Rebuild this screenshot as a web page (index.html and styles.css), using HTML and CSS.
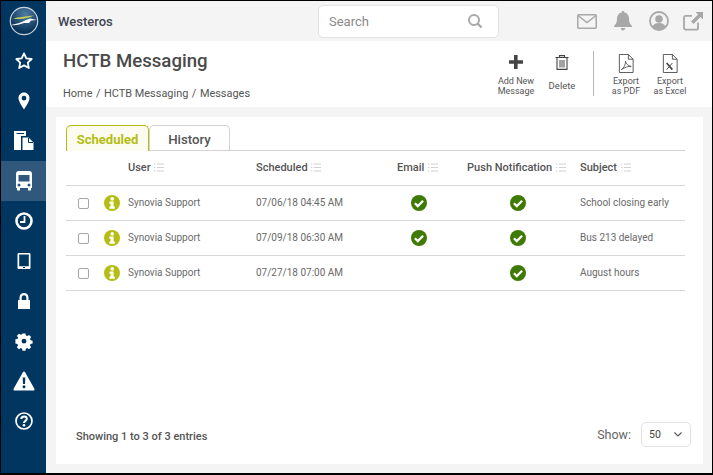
FILE: index.html
```html
<!DOCTYPE html>
<html lang="en">
<head>
<meta charset="utf-8">
<title>HCTB Messaging</title>
<link rel="stylesheet" href="styles.css">
</head>
<body>
<svg class="defs" width="0" height="0" aria-hidden="true">
  <symbol id="sort" viewBox="0 0 10 9"><path d="M0 1h1.500M3 1h7M0 4.500h1.500M3 4.500h7M0 8h1.500M3 8h7" fill="none" stroke="currentColor" stroke-width="1"/></symbol>
  <symbol id="info" viewBox="0 0 16 16"><circle cx="8" cy="8" r="8" fill="#b5bd13"/><circle cx="8.200" cy="3.900" r="1.800" fill="#fff"/><path d="M5.400 6.600h4.200v5h1.200v2.200H5.400v-2.200h1.200V8.800H5.400z" fill="#fff"/></symbol>
  <symbol id="check" viewBox="0 0 16 16"><circle cx="8" cy="8" r="8" fill="#3f7a05"/><path d="M3.900 8.200l2.900 2.900 5.300-5.300" fill="none" stroke="#fff" stroke-width="2.200"/></symbol>
</svg>
<div class="app">
  <nav class="side">
    <div class="logo">
      <svg width="30" height="30" viewBox="0 0 30 30">
        <defs><radialGradient id="lg" cx="55%" cy="25%" r="65%"><stop offset="0" stop-color="#4f7da3"/><stop offset="1" stop-color="#0a3359"/></radialGradient></defs>
        <circle cx="15" cy="15" r="13.700" fill="url(#lg)" stroke="#c9d3dc" stroke-width="1.200"/>
        <path d="M4 12.500C10 11 18 10 25 9.500 18 12.500 12 14 4 12.500z" fill="#c6cf55"/>
        <path d="M2 19c6-1 11-3 15-5l4-1.500 7 1.500-6 .5-2 2.500-5 0C11 18.500 6 20 2 19z" fill="#fff"/>
      </svg>
    </div>
    <a class="nav-item"><svg width="20" height="20" viewBox="0 0 20 20"><path d="M10 2.400l2.300 4.900 5.400.7-3.900 3.700 1 5.300L10 14.400l-4.800 2.600 1-5.300L2.300 8l5.400-.7z" fill="none" stroke="#fff" stroke-width="1.800" stroke-linejoin="round"/></svg></a>
    <a class="nav-item"><svg width="20" height="20" viewBox="0 0 20 20"><path fill-rule="evenodd" d="M10 1.500c3.300 0 5.500 2.500 5.500 5.500 0 3.500-3.700 8.500-5.500 11.500C8.200 15.500 4.500 10.500 4.500 7c0-3 2.200-5.500 5.500-5.500zM10 4.800a2.400 2.400 0 1 0 0 4.800 2.400 2.400 0 0 0 0-4.800z" fill="#fff"/></svg></a>
    <a class="nav-item"><svg width="22" height="22" viewBox="0 0 22 22"><path d="M1 1h12v5H8v14H1z" fill="#fff"/><path d="M3.500 3h7.500v1H3.500z" fill="#003660"/><path d="M9.500 7.500h6l5 5V20h-11z" fill="#fff"/><path d="M15.500 8v4.500H20" fill="none" stroke="#003660"/></svg></a>
    <a class="nav-item active"><svg width="20" height="22" viewBox="0 0 20 22"><path fill-rule="evenodd" d="M5 1h10c2 0 3 1 3 3v14h-1v2.500h-3V18H6v2.500H3V18H2V4c0-2 1-3 3-3zM4.500 5v6.500h11V5zM5 13.500a1.500 1.500 0 1 0 0 3 1.500 1.500 0 0 0 0-3zm10 0a1.500 1.500 0 1 0 0 3 1.500 1.500 0 0 0 0-3z" fill="#fff"/></svg></a>
    <a class="nav-item"><svg width="20" height="20" viewBox="0 0 20 20"><circle cx="10" cy="10" r="7.500" fill="none" stroke="#fff" stroke-width="2.600"/><path d="M10.500 5v6H6" fill="none" stroke="#fff" stroke-width="1.800"/></svg></a>
    <a class="nav-item"><svg width="16" height="20" viewBox="0 0 16 20"><path fill-rule="evenodd" d="M3 2h10c1 0 1.500.5 1.500 1.500v13c0 1-.5 1.500-1.500 1.500H3c-1 0-1.500-.5-1.500-1.500v-13C1.500 2.500 2 2 3 2zm.200 1.600v11.600h9.600V3.600zM7 16v.900h2V16z" fill="#fff"/></svg></a>
    <a class="nav-item"><svg width="16" height="20" viewBox="0 0 16 20"><path fill-rule="evenodd" d="M8 2c2.800 0 4.500 2 4.500 4.500V9h1.500v9H2V9h1.500V6.500C3.500 4 5.200 2 8 2zm0 2.200C6.500 4.200 5.700 5.200 5.700 6.700V9h4.600V6.700C10.300 5.200 9.500 4.200 8 4.200z" fill="#fff"/></svg></a>
    <a class="nav-item"><svg width="20" height="20" viewBox="0 0 20 20"><path fill-rule="evenodd" d="M8.300 1.500h3.400l.5 2.400 1.500.6 2.100-1.300 2.400 2.400-1.300 2.100.6 1.500 2.400.5v3.400l-2.400.5-.6 1.500 1.300 2.100-2.400 2.400-2.100-1.300-1.500.6-.5 2.400H8.300l-.5-2.400-1.500-.6-2.100 1.300-2.400-2.400 1.300-2.100-.6-1.500-2.400-.5V8.200l2.400-.5.6-1.500-1.300-2.100 2.400-2.400 2.100 1.300 1.500-.6zM10 7.500a2.800 2.800 0 1 0 0 5.600 2.800 2.800 0 0 0 0-5.600z" transform="translate(1.300 1.200) scale(.87)" fill="#fff"/></svg></a>
    <a class="nav-item"><svg width="22" height="20" viewBox="0 0 22 20"><path fill-rule="evenodd" d="M11 .5c.5 0 .9.300 1.100.700l9.300 16.500c.4.800-.1 1.800-1 1.800H1.600c-.9 0-1.400-1-1-1.800L9.900 1.200c.2-.4.600-.7 1.100-.7zM9.700 6.500l.3 6.500h2l.3-6.500zM11 14.300a1.500 1.500 0 1 0 0 3 1.500 1.500 0 0 0 0-3z" fill="#fff"/></svg></a>
    <a class="nav-item"><svg width="20" height="20" viewBox="0 0 20 20"><circle cx="10" cy="10" r="8" fill="none" stroke="#fff" stroke-width="1.700"/><path d="M7.300 8c0-1.700 1.200-2.600 2.800-2.600S12.800 6.300 12.800 7.800c0 2-2.800 2.200-2.800 4.200" fill="none" stroke="#fff" stroke-width="2"/><circle cx="10" cy="14.300" r="1.300" fill="#fff"/></svg></a>
  </nav>

  <div class="main">
    <header class="top">
      <div class="brand">Westeros</div>
      <div class="search">
        <span class="search-text">Search</span>
        <svg width="16" height="16" viewBox="0 0 16 16"><circle cx="7" cy="7" r="5" fill="none" stroke="#a8a8a8" stroke-width="2"/><path d="M10.500 10.500l4 4" stroke="#a8a8a8" stroke-width="2.400"/></svg>
      </div>
      <div class="top-icons">
        <svg width="20" height="15" viewBox="0 0 20 15"><rect x=".75" y=".75" width="18.500" height="13.500" rx="1" fill="none" stroke="#a8a8a8" stroke-width="1.500"/><path d="M1 1.500l9 7 9-7" fill="none" stroke="#a8a8a8" stroke-width="1.500"/></svg>
        <svg width="18" height="20" viewBox="0 0 18 20"><path d="M9 0c1 0 1.500.6 1.500 1.500C13.500 2.200 15 4.500 15 7.500c0 4 1 5.500 3 7.500v1H0v-1c2-2 3-3.500 3-7.500 0-3 1.500-5.300 4.500-6C7.500.6 8 0 9 0zM6.800 17h4.400c0 1.500-1 2.500-2.200 2.500S6.800 18.500 6.800 17z" fill="#a8a8a8"/></svg>
        <svg width="20" height="20" viewBox="0 0 20 20"><circle cx="10" cy="10" r="9" fill="none" stroke="#a8a8a8" stroke-width="1.800"/><circle cx="10" cy="8" r="3.800" fill="#a8a8a8"/><path d="M3.500 15.500c1-2.500 3.500-3.500 6.500-3.500s5.500 1 6.500 3.500C15 17.500 12.500 18.500 10 18.500S5 17.500 3.500 15.500z" fill="#a8a8a8"/></svg>
        <svg class="link-ic" width="20" height="19" viewBox="0 0 20 19"><path d="M15 10.500V16c0 1-.6 1.700-1.700 1.700H2.700C1.600 17.700 1 17 1 16V5.500c0-1 .6-1.700 1.700-1.700H9" fill="none" stroke="#a8a8a8" stroke-width="1.800"/><path d="M12.500 0H20v7.500l-2.500-2.500-7 7-2.500-2.500 7-7z" fill="#a8a8a8"/></svg>
      </div>
    </header>

    <section class="head">
      <div class="head-left">
        <h1>HCTB Messaging</h1>
        <div class="crumbs"><span>Home</span><span>/</span><span>HCTB Messaging</span><span>/</span><span>Messages</span></div>
      </div>
      <div class="actions">
        <a class="action a-add">
          <svg width="16" height="16" viewBox="0 0 16 16"><path d="M6 1h3.600v5.300H15v3.500H9.600V15H6V9.800H1V6.300h5z" fill="#444"/></svg>
          <span>Add New<br>Message</span>
        </a>
        <a class="action a-del">
          <svg width="14" height="15" viewBox="0 0 14 15"><path d="M.5 2.500h13M4.500 2.500V.6h5v1.900M2 3v11.400h10V3" fill="none" stroke="#444" stroke-width="1.100"/><path d="M5 5v7.500M7 5v7.500M9 5v7.500" stroke="#444" stroke-width="1"/></svg>
          <span>Delete</span>
        </a>
        <span class="divider"></span>
        <a class="action a-pdf">
          <svg width="16" height="19" viewBox="0 0 16 20"><path d="M1 .5h9.500l5 5v14H1z" fill="#fff" stroke="#555"/><path d="M10.500.5v5h5" fill="none" stroke="#555"/><path d="M3 16.500c3-2 4.500-5 4.500-9 .5 3 2.500 5 6 5.500-3-.2-6.500 1-10.500 3.500z" fill="none" stroke="#555" stroke-width=".9"/></svg>
          <span>Export<br>as PDF</span>
        </a>
        <a class="action a-xls">
          <svg width="16" height="19" viewBox="0 0 16 20"><path d="M1 .5h9.500l5 5v14H1z" fill="#fff" stroke="#555"/><path d="M10.500.5v5h5" fill="none" stroke="#555"/><path d="M4.500 9.500l6 7" stroke="#444" stroke-width="1.800"/><path d="M10.500 9.500l-6 7" stroke="#444" stroke-width="1"/></svg>
          <span>Export<br>as Excel</span>
        </a>
      </div>
    </section>

    <div class="body">
      <div class="card">
        <div class="tabs">
          <a class="tab on">Scheduled</a>
          <a class="tab">History</a>
        </div>
        <table class="grid">
          <colgroup>
            <col class="c-box"><col class="c-info"><col class="c-user"><col class="c-date"><col class="c-mail"><col class="c-push"><col class="c-subj">
          </colgroup>
          <thead>
            <tr>
              <th></th><th></th>
              <th>User <svg class="sort"><use href="#sort"/></svg></th>
              <th>Scheduled <svg class="sort"><use href="#sort"/></svg></th>
              <th class="mid">Email <svg class="sort"><use href="#sort"/></svg></th>
              <th class="mid">Push Notification <svg class="sort"><use href="#sort"/></svg></th>
              <th>Subject <svg class="sort"><use href="#sort"/></svg></th>
            </tr>
          </thead>
          <tbody>
            <tr>
              <td class="box"><input type="checkbox" class="cb"></td>
              <td><svg class="ic"><use href="#info"/></svg></td>
              <td>Synovia Support</td><td>07/06/18 04:45 AM</td>
              <td class="mid"><svg class="ic"><use href="#check"/></svg></td>
              <td class="mid"><svg class="ic"><use href="#check"/></svg></td>
              <td>School closing early</td>
            </tr>
            <tr>
              <td class="box"><input type="checkbox" class="cb"></td>
              <td><svg class="ic"><use href="#info"/></svg></td>
              <td>Synovia Support</td><td>07/09/18 06:30 AM</td>
              <td class="mid"><svg class="ic"><use href="#check"/></svg></td>
              <td class="mid"><svg class="ic"><use href="#check"/></svg></td>
              <td>Bus 213 delayed</td>
            </tr>
            <tr>
              <td class="box"><input type="checkbox" class="cb"></td>
              <td><svg class="ic"><use href="#info"/></svg></td>
              <td>Synovia Support</td><td>07/27/18 07:00 AM</td>
              <td class="mid"></td>
              <td class="mid"><svg class="ic"><use href="#check"/></svg></td>
              <td>August hours</td>
            </tr>
          </tbody>
        </table>
        <div class="foot">
          <div class="count">Showing 1 to 3 of 3 entries</div>
          <div class="show">
            <span>Show:</span>
            <div class="select"><span>50</span><svg width="8" height="5" viewBox="0 0 8 5"><path d="M.5.500L4 4 7.500.5" fill="none" stroke="#555" stroke-width="1.100"/></svg></div>
          </div>
        </div>
      </div>
    </div>
  </div>
</div>
</body>
</html>
```
FILE: styles.css
```css
* { box-sizing: border-box; }
html, body { margin: 0; padding: 0; height: 100%; overflow: hidden; }
body { font-family: Roboto, "Liberation Sans", sans-serif; color: #555; background: #f4f4f4; }
.defs { position: absolute; }
.app { display: flex; width: 713px; height: 475px; border: 1px solid #000; border-bottom-width: 2px; }
.side { width: 45px; flex: none; background: #003660; display: flex; flex-direction: column; }
.logo { height: 40px; display: flex; align-items: center; justify-content: center; }
.nav-item { height: 40px; display: flex; align-items: center; justify-content: center; }
.nav-item.active { background: #2f587c; }
.main { flex: 1; min-width: 0; display: flex; flex-direction: column; }
.top { height: 40px; flex: none; background: #f4f4f4; display: flex; align-items: center; padding-left: 12px; }
.brand { width: 260px; font-size: 13px; font-weight: 500; color: #3f4450; }
.search { width: 181px; height: 33px; background: #fff; border: 1px solid #e2e2e2; border-radius: 5px; display: flex; align-items: center; justify-content: space-between; padding: 0 15px 0 10px; }
.search-text { font-size: 13px; color: #8a8a8a; }
.top-icons { margin-left: 78px; display: flex; align-items: center; gap: 17px; }
.top-icons .link-ic { margin-left: -3px; }
.head { height: 66px; flex: none; background: #fff; display: flex; justify-content: space-between; padding: 0 0 0 17px; }
.head-left { padding-top: 9px; }
h1 { margin: 0; font-size: 18.650px; line-height: 22px; font-weight: 500; color: #4a4a4a; }
.crumbs { margin-top: 15px; display: flex; gap: 3.500px; font-size: 10.950px; line-height: 14px; color: #555; }
.actions { display: flex; align-items: flex-start; padding-top: 10px; }
.action { display: flex; flex-direction: column; align-items: center; font-size: 9px; line-height: 10px; color: #555; text-align: center; }
.action svg { flex: none; margin-top: 3px; margin-bottom: 3px; }
.a-add { width: 42px; }
.a-add svg { margin-bottom: 6px; }
.a-del { width: 30px; margin-left: 10px; font-size: 9.500px; }
.a-del svg { margin-top: 4px; margin-bottom: 11px; }
.a-pdf { width: 34px; margin-left: 15px; }
.a-xls { width: 40px; margin-left: 7px; margin-right: 22px; }
.divider { width: 1px; height: 45px; background: #b5b5b5; margin-left: 16px; }
.body { flex: 1; min-height: 0; background: #f4f4f4; padding: 10px 9px 9px 10px; display: flex; }
.card { flex: 1; background: #fff; padding: 8px 18px 0 10px; display: flex; flex-direction: column; }
.tabs { display: flex; height: 26px; flex: none; border-bottom: 1px solid #d2d2d2; }
.tab { height: 26px; padding-top: 6px; text-align: center; font-size: 13.250px; line-height: 16px; font-weight: 500; color: #555; border: 1px solid #d2d2d2; border-bottom: 0; border-radius: 5px 5px 0 0; width: 81px; }
.tab.on { width: 83px; font-size: 13px; color: #b5bd13; font-weight: 700; border-color: #b5bd13; background: #fbfcef; }
.grid { width: 619px; border-collapse: collapse; table-layout: fixed; }
.c-box { width: 38px; } .c-info { width: 24px; } .c-user { width: 128px; } .c-date { width: 126px; }
.c-mail { width: 74px; } .c-push { width: 124px; } .c-subj { width: 105px; }
.grid th { height: 34px; padding: 0; font-size: 11px; font-weight: 500; color: #555; text-align: left; border-bottom: 1px solid #d8d8d8; white-space: nowrap; }
.grid td { height: 35px; padding: 0; font-size: 10px; color: #6a6a6a; border-bottom: 1px solid #d8d8d8; white-space: nowrap; }
.grid .mid { text-align: center; }
.grid th.mid { padding-right: 3px; }
.box { padding-left: 12px !important; }
.cb { appearance: none; display: block; width: 11px; height: 11px; margin: 2px 0 0; border: 1px solid #aaa4a8; border-radius: 2px; background: #fff; }
.ic { display: block; width: 16px; height: 16px; }
.mid .ic { margin: 0 auto; }
.sort { width: 10px; height: 9px; color: #d0d0d0; margin-left: 1px; vertical-align: -0.500px; }
.foot { margin-top: auto; display: flex; align-items: center; justify-content: space-between; padding: 0 0 17px 10px; margin-right: -6px; }
.count { font-size: 11px; font-weight: 500; color: #555; padding-top: 4px; }
.show { display: flex; align-items: center; gap: 10px; font-size: 12.500px; color: #666; }
.select { width: 50px; height: 25px; border: 1px solid #e2e2e2; border-radius: 5px; display: flex; align-items: center; justify-content: space-between; padding: 0 8px 0 7px; font-size: 10.500px; color: #444; }
```
